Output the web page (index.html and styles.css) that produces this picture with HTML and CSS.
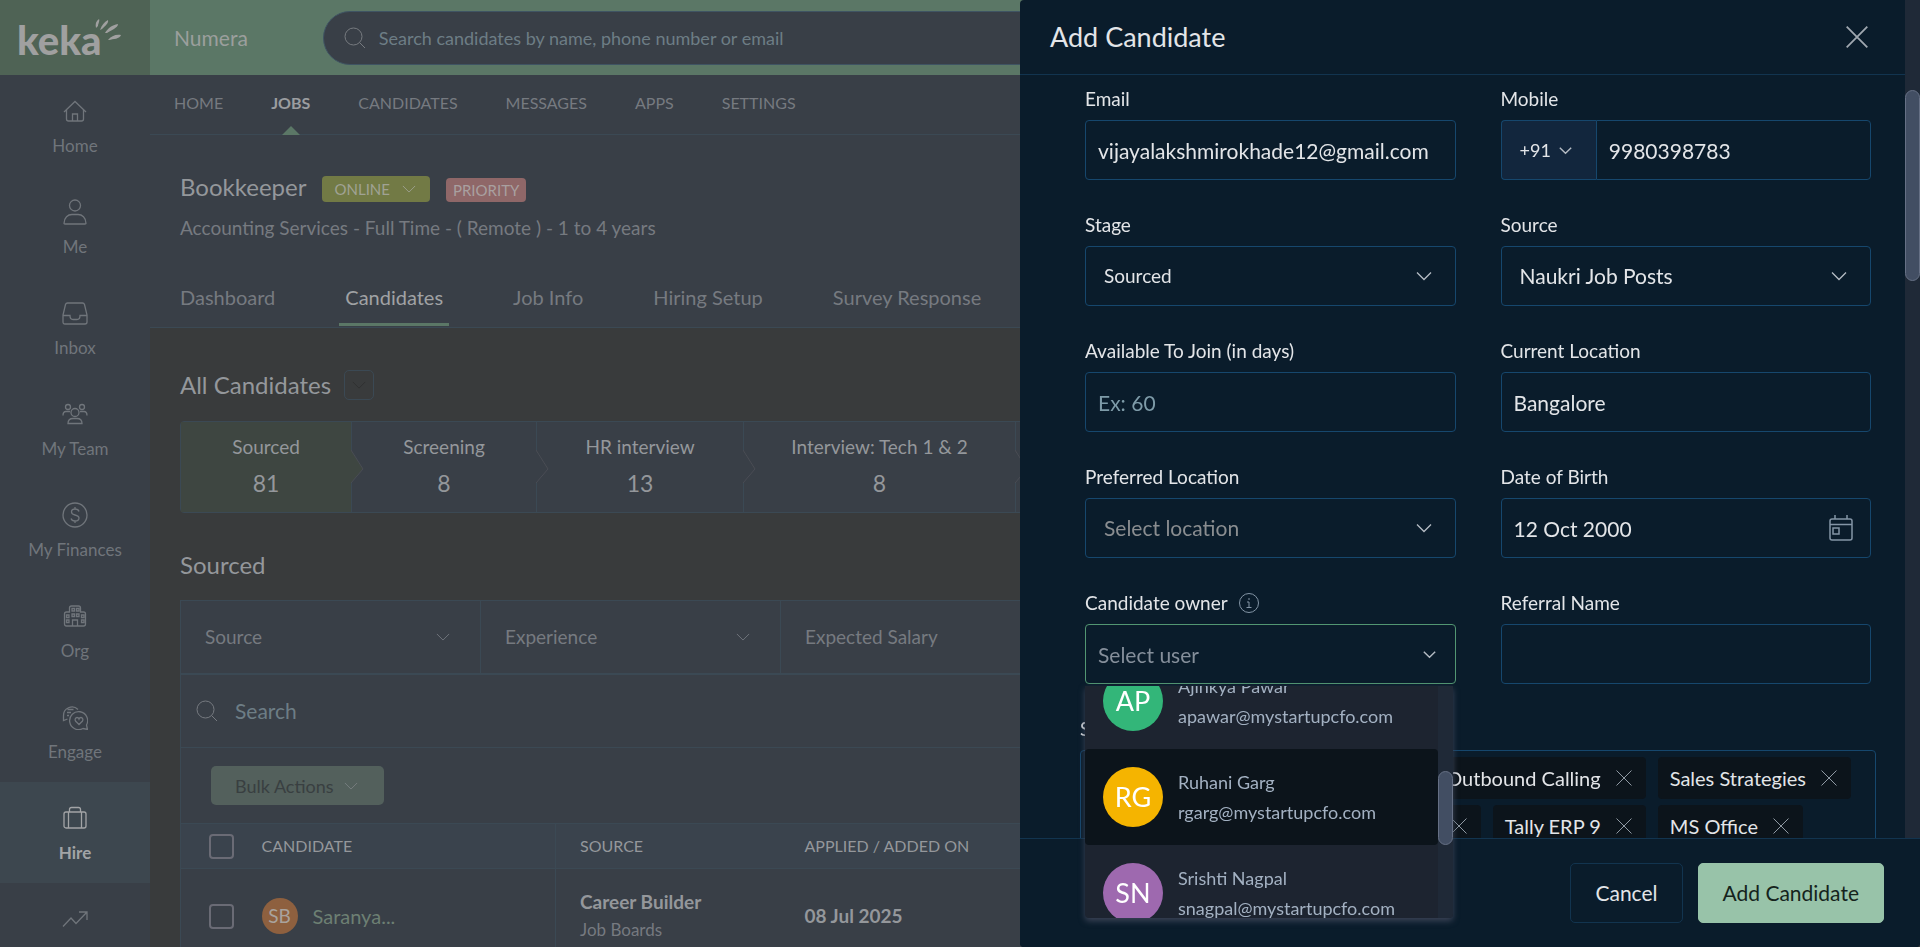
FILE: index.html
```html
<!DOCTYPE html>
<html lang="en">
  <head>
    <meta charset="UTF-8" />
    <meta name="viewport" content="width=device-width, initial-scale=1.0" />
    <title>Add Candidate</title>
    <link rel="stylesheet" href="styles.css">
  </head>
  <body>
    <!-- shared icons -->
    <svg class="sprite" aria-hidden="true">
      <symbol id="chevron" viewBox="0 0 16 16"><path d="M1 4.5l7 7 7-7" /></symbol>
      <symbol id="close" viewBox="0 0 16 16"><path d="M.5.5l15 15M15.5.5l-15 15" /></symbol>
      <symbol id="search" viewBox="0 0 22 22"><circle cx="9.500" cy="9.500" r="8.500" /><path d="M15.500 15.500l5.500 5.500" /></symbol>
    </svg>

    <div class="app">
      <aside class="sidebar">
        <a href="#" class="logo" aria-label="keka">
          <span>keka</span>
          <svg class="rays" viewBox="0 0 28 22">
            <path d="M2 9C1 5 2 2 5 0c1 2-1 5-1 7zM6 11C8 6 10 3 14 1c1 3-3 6-6 9zM11 14c3-5 7-8 13-9 0 4-7 6-11 9zM14 21c3-4 8-6 13-5-1 4-8 4-12 5z" />
          </svg>
        </a>
        <nav class="side-nav">
          <a href="#" class="side-item">
            <svg class="side-icon" viewBox="0 0 26 26"><path d="M2 14L13 3.500 24 14M4.500 12v9q0 2 2 2h13q2 0 2-2v-9M10.500 23v-7h5v7" /></svg>
            Home
          </a>
          <a href="#" class="side-item">
            <svg class="side-icon" viewBox="0 0 26 26"><circle cx="13" cy="6.500" r="5.500" /><path d="M2 24.500c0-6 4-9 8-9h6c4 0 8 3 8 9q0 .5-1 .5H3q-1 0-1-.5z" /></svg>
            Me
          </a>
          <a href="#" class="side-item">
            <svg class="side-icon" viewBox="0 0 26 26"><path d="M5.500 3h15q1.500 0 2 1.500L25 15v7q0 2-2 2H3q-2 0-2-2v-7L3.500 4.500Q4 3 5.500 3zM1 15.500h7q0 4 3 4h4q3 0 3-4h7" /></svg>
            Inbox
          </a>
          <a href="#" class="side-item">
            <svg class="side-icon" viewBox="0 0 26 26"><circle cx="6" cy="6" r="2.500" /><circle cx="20" cy="6" r="2.500" /><circle cx="13" cy="11.500" r="4" /><path d="M6 22.500c0-3 2-5 5-5h4c3 0 5 2 5 5zM1 14.500c0-3 1-4 3-4h4M25 14.500c0-3-1-4-3-4h-4" /></svg>
            My Team
          </a>
          <a href="#" class="side-item">
            <svg class="side-icon" viewBox="0 0 26 26"><circle cx="13" cy="13" r="12" /><path d="M17 9.500c-.5-2-2-2.500-4-2.500s-3.500 1-3.500 3 1.500 2.500 3.500 3 4 1 4 3-2 3-4 3-3.500-1-4-2.500M13 5v2M13 19v2" /></svg>
            My Finances
          </a>
          <a href="#" class="side-item">
            <svg class="side-icon" viewBox="0 0 26 26"><path d="M7.500 9V5q0-2 2-2h7q2 0 2 2v4h3q2 0 2 2v10q0 2-2 2h-17q-2 0-2-2V11q0-2 2-2zM10 5.500h2.500v2.500H10zM14.500 5.500H17v2.500h-2.500zM10 11h2.500v2.500H10zM14.500 11H17v2.500h-2.500zM4.500 12H7v2.500H4.500zM4.500 17H7v2.500H4.500zM19.500 12H22v2.500h-2.500zM19.500 17H22v2.500h-2.500zM10.500 23v-6h5v6" /></svg>
            Org
          </a>
          <a href="#" class="side-item">
            <svg class="side-icon" viewBox="0 0 26 26"><path d="M16 5.500A8.500 8.500 0 0 0 1.500 12v4.500l4-1.500M5.500 5.500h6M5 8.500h4M5 11.500h2" /><path d="M25.500 25.500l-4.500-1a9 9 0 1 1 3.500-3.500z" /><path d="M17 20.500l-3.500-3.500c-1-1.500 0-3.500 1.500-3.500q1.500 0 2 1.500.5-1.500 2-1.500c1.500 0 2.500 2 1.500 3.500z" /></svg>
            Engage
          </a>
          <a href="#" class="side-item active">
            <svg class="side-icon" viewBox="0 0 26 26"><rect x="2" y="7" width="22" height="16" rx="2" /><path d="M7.500 7V4.500q0-2 2-2h7q2 0 2 2V7M6.500 7v16M19.500 7v16" /></svg>
            Hire
          </a>
          <a href="#" class="side-item" aria-label="Performance">
            <svg class="side-icon" viewBox="0 0 26 26"><path d="M1 20.500l8-8.500 5 5.500L25 6M17 6h8v8" /></svg>
          </a>
        </nav>
      </aside>

      <div class="page">
        <header class="topbar">
          <span class="company">Numera</span>
          <label class="global-search">
            <svg class="icon-search"><use href="#search" /></svg>
            <input type="search" aria-label="Search candidates" placeholder="Search candidates by name, phone number or email" />
          </label>
        </header>

        <nav class="main-nav">
          <a href="#">HOME</a>
          <a href="#" class="active">JOBS</a>
          <a href="#">CANDIDATES</a>
          <a href="#">MESSAGES</a>
          <a href="#">APPS</a>
          <a href="#">SETTINGS</a>
        </nav>

        <section class="job">
          <div class="job-title">
            <h1>Bookkeeper</h1>
            <button type="button" class="badge online">ONLINE <svg class="chev"><use href="#chevron" /></svg></button>
            <span class="badge priority">PRIORITY</span>
          </div>
          <p class="job-meta">Accounting Services - Full Time - ( Remote ) - 1 to 4 years</p>
          <nav class="tabs">
            <a href="#">Dashboard</a>
            <a href="#" class="active">Candidates</a>
            <a href="#">Job Info</a>
            <a href="#">Hiring Setup</a>
            <a href="#">Survey Response</a>
          </nav>
        </section>

        <main class="content">
          <div class="content-head">
            <h2>All Candidates</h2>
            <button type="button" class="view-toggle" aria-label="Change view"><svg class="chev"><use href="#chevron" /></svg></button>
          </div>

          <div class="stages">
            <div class="stage active"><span>Sourced</span><b>81</b><svg class="arrow" viewBox="0 0 13 36"><path d="M0 1l12 19L0 34" /></svg></div>
            <div class="stage"><span>Screening</span><b>8</b><svg class="arrow" viewBox="0 0 13 36"><path d="M0 1l12 19L0 34" /></svg></div>
            <div class="stage"><span>HR interview</span><b>13</b><svg class="arrow" viewBox="0 0 13 36"><path d="M0 1l12 19L0 34" /></svg></div>
            <div class="stage"><span>Interview: Tech 1 &amp; 2</span><b>8</b><svg class="arrow" viewBox="0 0 13 36"><path d="M0 1l12 19L0 34" /></svg></div>
            <div class="stage rest"></div>
          </div>

          <h2 class="list-title">Sourced</h2>
          <div class="panel">
            <div class="filters">
              <div class="filter pick">
                <select aria-label="Source"><option>Source</option></select>
                <svg class="chev"><use href="#chevron" /></svg>
              </div>
              <div class="filter pick">
                <select aria-label="Experience"><option>Experience</option></select>
                <svg class="chev"><use href="#chevron" /></svg>
              </div>
              <div class="filter pick">
                <select aria-label="Expected Salary"><option>Expected Salary</option></select>
                <svg class="chev"><use href="#chevron" /></svg>
              </div>
            </div>
            <label class="list-search">
              <svg class="icon-search"><use href="#search" /></svg>
              <input type="search" aria-label="Search" placeholder="Search" />
            </label>
            <div class="bulk">
              <button type="button" disabled>Bulk Actions <svg class="chev"><use href="#chevron" /></svg></button>
            </div>
          </div>
          <table class="candidates">
            <colgroup>
              <col class="col-check" />
              <col class="col-name" />
              <col class="col-source" />
              <col />
            </colgroup>
            <thead>
              <tr>
                <th><input type="checkbox" aria-label="Select all" /></th>
                <th class="name">CANDIDATE</th>
                <th>SOURCE</th>
                <th>APPLIED / ADDED ON</th>
              </tr>
            </thead>
            <tbody>
              <tr>
                <td><input type="checkbox" aria-label="Select Saranya" /></td>
                <td class="name"><div class="person"><span class="initials">SB</span><a href="#">Saranya...</a></div></td>
                <td><strong>Career Builder</strong><small>Job Boards</small></td>
                <td><strong>08 Jul 2025</strong></td>
              </tr>
            </tbody>
          </table>
        </main>
      </div>
    </div>

    <form class="drawer" role="dialog" aria-label="Add Candidate">
      <div class="drawer-top">
        <div class="drawer-main">
          <header class="drawer-head">
            <h2>Add Candidate</h2>
            <button type="button" class="close" aria-label="Close"><svg><use href="#close" /></svg></button>
          </header>
          <div class="drawer-body">
            <div class="fields">
              <div class="field">
                <label for="email">Email</label>
                <input id="email" class="control" type="text" value="vijayalakshmirokhade12@gmail.com" />
              </div>
              <div class="field">
                <label for="mobile">Mobile</label>
                <div class="phone">
                  <button type="button" class="code">+91 <svg class="chev"><use href="#chevron" /></svg></button>
                  <input id="mobile" class="control" type="tel" value="9980398783" />
                </div>
              </div>
              <div class="field">
                <label for="stage">Stage</label>
                <div class="pick">
                  <select id="stage" class="control small"><option>Sourced</option></select>
                  <svg class="chev"><use href="#chevron" /></svg>
                </div>
              </div>
              <div class="field">
                <label for="source">Source</label>
                <div class="pick">
                  <select id="source" class="control"><option>Naukri Job Posts</option></select>
                  <svg class="chev"><use href="#chevron" /></svg>
                </div>
              </div>
              <div class="field">
                <label for="join">Available To Join (in days)</label>
                <input id="join" class="control" type="text" placeholder="Ex: 60" />
              </div>
              <div class="field">
                <label for="current">Current Location</label>
                <input id="current" class="control" type="text" value="Bangalore" />
              </div>
              <div class="field">
                <label for="preferred">Preferred Location</label>
                <div class="pick">
                  <select id="preferred" class="control empty"><option>Select location</option></select>
                  <svg class="chev"><use href="#chevron" /></svg>
                </div>
              </div>
              <div class="field">
                <label for="dob">Date of Birth</label>
                <div class="pick">
                  <input id="dob" class="control" type="text" value="12 Oct 2000" />
                  <svg class="calendar" viewBox="0 0 24 26"><rect x="1" y="4" width="22" height="21" rx="2" /><path d="M1 9.500h22M6 0v4M18 0v4" /><rect x="4" y="13" width="6" height="6" /></svg>
                </div>
              </div>
              <div class="field">
                <label for="owner">Candidate owner
                  <svg class="info" viewBox="0 0 20 20"><circle cx="10" cy="10" r="9.500" /><path d="M10 5v2M8 9h2v5M7.500 14.500h5" /></svg>
                </label>
                <div class="pick owner">
                  <input id="owner" class="control" type="text" role="combobox" aria-expanded="true" placeholder="Select user" />
                  <svg class="chev"><use href="#chevron" /></svg>
                  <div class="menu">
                    <ul class="users" role="listbox">
                      <li role="option"><span class="avatar green">AP</span><div>Ajinkya Pawar<br />apawar@mystartupcfo.com</div></li>
                      <li role="option" class="hover"><span class="avatar amber">RG</span><div>Ruhani Garg<br />rgarg@mystartupcfo.com</div></li>
                      <li role="option"><span class="avatar purple">SN</span><div>Srishti Nagpal<br />snagpal@mystartupcfo.com</div></li>
                    </ul>
                    <div class="menu-track"><div class="thumb"></div></div>
                  </div>
                </div>
              </div>
              <div class="field">
                <label for="referral">Referral Name</label>
                <input id="referral" class="control" type="text" />
              </div>
            </div>
            <div class="skills">
              <div class="skills-label">Skills</div>
              <div class="tags">
                <div class="tag-row">
                  <span class="tag">Outbound Calling <button type="button" aria-label="Remove"><svg><use href="#close" /></svg></button></span>
                  <span class="tag">Sales Strategies <button type="button" aria-label="Remove"><svg><use href="#close" /></svg></button></span>
                </div>
                <div class="tag-row short">
                  <span class="tag"><button type="button" aria-label="Remove"><svg><use href="#close" /></svg></button></span>
                  <span class="tag">Tally ERP 9 <button type="button" aria-label="Remove"><svg><use href="#close" /></svg></button></span>
                  <span class="tag">MS Office <button type="button" aria-label="Remove"><svg><use href="#close" /></svg></button></span>
                </div>
              </div>
            </div>
          </div>
        </div>
        <div class="drawer-track"><div class="thumb"></div></div>
      </div>
      <footer class="drawer-foot">
        <button type="button" class="btn">Cancel</button>
        <button type="button" class="btn primary">Add Candidate</button>
      </footer>
    </form>
  </body>
</html>
```
FILE: styles.css
```css
* {
  margin: 0;
  padding: 0;
  box-sizing: border-box;
}
body {
  background-color: #393b3c;
  color: #94979b;
  font-family: Lato, "Liberation Sans", sans-serif;
  font-size: 18px;
  line-height: 24px;
  overflow: hidden;
}
a {
  color: inherit;
  text-decoration: none;
}
button,
input,
select {
  font: inherit;
  color: inherit;
  background: none;
  border: 0;
  outline: 0;
}
select,
input[type="search"] {
  appearance: none;
}
svg {
  fill: none;
  stroke: currentColor;
  flex: none;
}
ul {
  list-style: none;
}
h1,
h2 {
  font-size: 24px;
  line-height: 30px;
  font-weight: 400;
}
.sprite {
  display: none;
}
.chev {
  width: 14px;
  height: 14px;
}
.icon-search {
  width: 22px;
  height: 22px;
}

/* select with a chevron on top of its right end */
.pick {
  display: grid;
  align-items: center;
}
.pick > select,
.pick > input,
.pick > svg {
  grid-area: 1 / 1;
}
.pick > svg {
  justify-self: end;
  pointer-events: none;
}

.app {
  display: flex;
  height: 100vh;
  overflow: hidden;
}

/* sidebar */
.sidebar {
  width: 150px;
  flex: none;
  background: #393f47;
}
.logo {
  display: flex;
  align-items: center;
  height: 75px;
  padding: 4px 0 0 17px;
  background: #4f6355;
  color: #a0a0a0;
  font-size: 40px;
  line-height: 44px;
  font-weight: 900;
}
.rays {
  width: 28px;
  height: 22px;
  margin: 0 0 20px -8px;
  fill: #a0a0a0;
  stroke: none;
}
.side-item {
  display: flex;
  flex-direction: column;
  align-items: center;
  gap: 10px;
  height: 101px;
  padding-top: 23px;
  color: #70757b;
  font-size: 17px;
}
.side-icon {
  width: 26px;
  height: 26px;
  stroke-width: 1.3;
}
.side-item.active {
  background: #3d474f;
  color: #a2a4a6;
  font-weight: 700;
}

/* top bar */
.page {
  flex: 1;
  min-width: 0;
}
.topbar {
  display: flex;
  align-items: center;
  gap: 75px;
  height: 75px;
  padding: 0 24px;
  background: #5b7766;
  color: #9b9f9d;
  font-size: 21px;
}
.global-search {
  display: flex;
  align-items: center;
  gap: 13px;
  flex: 1;
  height: 54px;
  padding: 0 20px;
  border: 1px solid #3f5463;
  border-radius: 27px;
  background: #393f47;
  color: #777b80;
  font-size: 18px;
}
.global-search input,
.list-search input {
  flex: 1;
}
.global-search input::placeholder,
.list-search input::placeholder {
  color: #6d7d85;
}
.main-nav {
  display: flex;
  gap: 48px;
  height: 60px;
  padding: 0 24px;
  border-bottom: 1px solid #3b4954;
  background: #393f47;
  color: #767a80;
  font-size: 16px;
}
.main-nav a {
  display: flex;
  flex-direction: column;
  align-items: center;
  padding-top: 16px;
}
.main-nav .active {
  color: #9b9da0;
  font-weight: 700;
}
.main-nav .active::after {
  content: "";
  margin-top: 11px;
  border: 9px solid transparent;
  border-top: 0;
  border-bottom-color: #5b7766;
}

/* job header */
.job {
  padding: 37px 30px 1px;
  border-bottom: 1px solid #3b4954;
  background: #393f47;
}
.job-title {
  display: flex;
  align-items: flex-end;
  gap: 16px;
}
.badge {
  display: flex;
  align-items: center;
  height: 24px;
  padding: 0 7px;
  border-radius: 4px;
  font-size: 15px;
}
.online {
  gap: 12px;
  height: 26px;
  padding: 0 14px 0 12px;
  background: #727a45;
  color: #a0a294;
}
.priority {
  background: #8f6768;
  color: #a9a0a0;
}
.job-meta {
  margin-top: 14px;
  color: #767a80;
  font-size: 19px;
}
.tabs {
  display: flex;
  gap: 58px;
  margin: 45px 0 0 -6px;
  color: #767a80;
  font-size: 20px;
}
.tabs a {
  padding: 0 6px 14px;
  border-bottom: 3px solid transparent;
}
.tabs .active {
  border-color: #5b7766;
  color: #a0a2a4;
}

/* candidates */
.content {
  padding: 42px 30px 0;
}
.content-head {
  display: flex;
  gap: 13px;
}
.view-toggle {
  display: grid;
  place-items: center;
  width: 30px;
  height: 30px;
  border: 1px solid #3b4954;
  border-radius: 5px;
  color: #2f3030;
}
.stages {
  display: grid;
  grid-template-columns: 171px 185px 207px 272px 1fr;
  height: 92px;
  margin: 21px 0 37px;
  border: 1px solid #3b4954;
  border-radius: 4px;
  background: #393f47;
}
.stage {
  position: relative;
  display: flex;
  flex-direction: column;
  align-items: center;
  gap: 8px;
  padding-top: 12px;
  border-right: 1px solid #3b4954;
  font-size: 19px;
  line-height: 26px;
}
.stage b {
  font-size: 23px;
  line-height: 30px;
  font-weight: 400;
}
.stage.active {
  background: #3e4641;
}
.stage.rest {
  border: 0;
}
/* pointer over the next stage */
.arrow {
  position: absolute;
  top: 27px;
  right: -13px;
  z-index: 1;
  width: 13px;
  height: 36px;
  fill: #393f47;
  stroke: #4a4d54;
}
.stage.active .arrow {
  fill: #3e4641;
}
.list-title {
  margin-bottom: 20px;
}
.panel {
  border: solid #3b4954;
  border-width: 1px 1px 0;
  background: #393f47;
  color: #767a80;
}
.filters {
  display: grid;
  grid-template-columns: 300px 300px 1fr;
  height: 74px;
  border-bottom: 2px solid #3b4954;
  font-size: 19px;
}
.filter {
  border-right: 1px solid #3b4954;
}
.filter select {
  height: 72px;
  padding-left: 24px;
}
.filter .chev {
  margin-right: 30px;
}
.list-search {
  display: flex;
  align-items: center;
  gap: 17px;
  height: 73px;
  padding-left: 15px;
  border-bottom: 1px solid #3b4954;
  font-size: 21px;
}
.bulk {
  padding: 18px 30px;
}
.bulk button {
  display: flex;
  align-items: center;
  gap: 10px;
  height: 39px;
  padding: 0 26px 0 24px;
  border-radius: 5px;
  background: #53605c;
  color: #393f41;
}
.bulk .chev {
  color: #7a8183;
}
.candidates {
  width: 100%;
  table-layout: fixed;
  border-collapse: collapse;
  border: 1px solid #3b4954;
  background: #393f47;
  text-align: left;
}
.col-check {
  width: 81px;
}
.col-name {
  width: 294px;
}
.col-source {
  width: 225px;
}
.candidates th {
  height: 45px;
  padding-left: 24px;
  border-bottom: 1px solid #3b4954;
  background: #3a434d;
  font-size: 16px;
  font-weight: 400;
}
.candidates td {
  height: 95px;
  padding-left: 24px;
}
.candidates .name {
  padding-left: 0;
  border-right: 1px solid #3b4954;
}
.candidates input {
  display: block;
  appearance: none;
  width: 25px;
  height: 25px;
  margin-left: 4px;
  border: 2px solid #6a6b75;
  border-radius: 4px;
}
.candidates strong {
  display: block;
  font-size: 19px;
  font-weight: 700;
}
.candidates small {
  display: block;
  margin-top: 4px;
  color: #767a80;
  font-size: 17px;
}
.person {
  display: flex;
  align-items: center;
  gap: 15px;
  color: #6d7f73;
  font-size: 20px;
}
.initials {
  width: 36px;
  border-radius: 50%;
  background: #8e603f;
  color: #a9a39d;
  font-size: 19px;
  line-height: 36px;
  text-align: center;
}

/* drawer */
.drawer {
  position: fixed;
  inset: 0 0 0 auto;
  z-index: 10;
  display: flex;
  flex-direction: column;
  width: 900px;
  border-radius: 4px;
  background: #0a1c2b;
  color: #e3e5e8;
}
.drawer-top {
  display: flex;
  flex: 1;
  min-height: 0;
}
.drawer-main {
  flex: 1;
  display: flex;
  flex-direction: column;
}
.drawer-head {
  display: flex;
  align-items: center;
  justify-content: space-between;
  height: 75px;
  padding: 0 37px 0 30px;
  border-bottom: 1px solid #12344f;
}
.drawer-head h2 {
  font-size: 27px;
}
.close svg {
  display: block;
  width: 22px;
  height: 22px;
  color: #a0a8b0;
  stroke-width: 1.3;
}
.drawer-body {
  flex: 1;
  min-height: 0;
  padding: 12px 34px 0 65px;
}
.fields {
  display: grid;
  grid-template-columns: 1fr 1fr;
  gap: 33px 45px;
}
.field label {
  display: flex;
  align-items: center;
  gap: 11px;
  margin-bottom: 9px;
  font-size: 19px;
}
.control {
  width: 100%;
  height: 60px;
  padding: 0 12px;
  border: 1px solid #16476d;
  border-radius: 4px;
  font-size: 21px;
}
select.control {
  padding: 0 18px;
}
select.small {
  font-size: 19px;
}
select.empty {
  color: #8a8d90;
}
.control::placeholder {
  color: #7e9ba8;
}
.field .chev {
  width: 16px;
  height: 16px;
  margin-right: 24px;
  color: #b5bcc4;
  stroke-width: 1.3;
}
.phone {
  display: flex;
}
.phone .code {
  display: flex;
  align-items: center;
  gap: 8px;
  padding: 0 24px 0 18px;
  border: 1px solid #16476d;
  border-right: 0;
  border-radius: 4px 0 0 4px;
  background: #12263d;
}
.phone .chev {
  width: 13px;
  height: 13px;
  margin: 0;
  stroke-width: 1.7;
}
.phone .control {
  flex: 1;
  min-width: 0;
  border-radius: 0 4px 4px 0;
}
.calendar {
  width: 24px;
  height: 26px;
  margin-right: 18px;
  color: #8495a6;
  stroke-width: 1.5;
}
.info {
  width: 20px;
  height: 20px;
  color: #8495a6;
}
.owner {
  position: relative;
}
.owner .control {
  border-color: #529672;
}
.owner .control::placeholder {
  color: #858f9b;
}
.owner .chev {
  width: 13px;
  height: 13px;
  margin-right: 20px;
  stroke-width: 1.7;
}

/* open user list */
.menu {
  position: absolute;
  top: 62px;
  left: 0;
  right: 3px;
  z-index: 2;
  display: flex;
  height: 232px;
  overflow: hidden;
  border-radius: 0 0 4px 4px;
  background: #1d2430;
  box-shadow: 0 3px 6px #3c4457;
  color: #a3b1c2;
}
.users {
  flex: 1;
  margin-top: -33px;
}
.users li {
  display: flex;
  align-items: center;
  gap: 15px;
  height: 96px;
  padding: 0 18px;
  line-height: 30px;
}
.users .hover {
  border-radius: 4px;
  background: #0c141b;
}
.avatar {
  width: 60px;
  border-radius: 50%;
  color: #fff;
  font-size: 27px;
  line-height: 60px;
  text-align: center;
}
.green {
  background: #33b679;
}
.amber {
  background: #f5b400;
}
.purple {
  background: #9e69af;
}
.menu-track,
.drawer-track {
  width: 15px;
  background: #1f2937;
}
.thumb {
  border: 1px solid #667085;
  border-radius: 8px;
  background: #424e63;
}
.menu-track {
  padding-top: 85px;
}
.menu-track .thumb {
  height: 74px;
}
.drawer-track {
  padding-top: 90px;
}
.drawer-track .thumb {
  height: 191px;
}

.skills {
  margin: 33px -5px 0;
}
.skills-label {
  margin-bottom: 9px;
  font-size: 19px;
}
.tags {
  display: flex;
  flex-direction: column;
  gap: 6px;
  padding: 6px 12px 12px;
  border: 1px solid #16476d;
  border-radius: 4px;
}
.tag-row {
  display: flex;
  justify-content: flex-end;
  gap: 12px;
  padding-right: 12px;
}
.tag-row.short {
  padding-right: 60px;
}
.tag {
  display: flex;
  align-items: center;
  gap: 15px;
  height: 42px;
  padding: 0 14px 0 12px;
  border-radius: 4px;
  background: #0c141b;
  font-size: 20px;
}
.tag svg {
  display: block;
  width: 16px;
  height: 16px;
  color: #8f99a3;
}
.drawer-foot {
  position: relative;
  display: flex;
  justify-content: flex-end;
  gap: 15px;
  padding: 24px 36px;
  border-top: 1px solid #12344f;
  border-radius: 0 0 4px 4px;
  background: #0a1c2b;
}
.btn {
  height: 60px;
  padding: 0 24px;
  border: 1px solid #12344f;
  border-radius: 5px;
  font-size: 21px;
}
.primary {
  border-color: #98c3a9;
  background: #98c3a9;
  color: #15231c;
}
```
